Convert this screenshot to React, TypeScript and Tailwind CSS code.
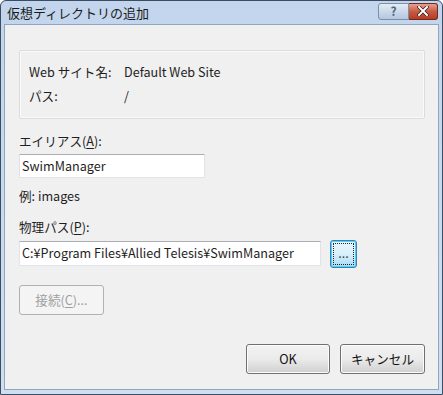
import React from "react";

const FONT = { fontFamily: '"Noto Sans CJK JP", "Liberation Sans", sans-serif' };

function Accel({ ch }: { ch: string }) {
  return <span className="underline underline-offset-2">{ch}</span>;
}

function DlgButton({
  children,
  className = "",
  disabled = false,
  focused = false,
}: {
  children: React.ReactNode;
  className?: string;
  disabled?: boolean;
  focused?: boolean;
}) {
  return (
    <div
      className={[
        "flex items-center justify-center rounded-[3px] border text-[12.6px]",
        disabled
          ? "border-[#adb2b5] bg-[#f4f4f4] text-[#a0a0a0]"
          : focused
          ? "border-[#3c7fb1] bg-gradient-to-b from-[#eaf6fd] via-[#d9f0fc] to-[#a7d9f5] text-[#111] shadow-[inset_0_0_0_1px_#48d4ff]"
          : "border-[#707070] bg-gradient-to-b from-[#f2f2f2] via-[#ebebeb] to-[#cfcfcf] text-[#111] shadow-[inset_0_0_0_1px_#fcfcfc]",
        className,
      ].join(" ")}
    >
      {children}
    </div>
  );
}

export default function App() {
  return (
    <div className="w-[443px] h-[395px] overflow-hidden bg-white" style={FONT}>
      <div className="w-full h-full rounded-t-[6px] border border-[#3a4d63] bg-gradient-to-b from-[#c2d5ec] to-[#cfdff0] flex flex-col">
        {/* Title bar */}
        <div className="h-[23px] flex items-center justify-between pl-[6px] pr-[4px] shrink-0">
          <span className="text-[13px] text-[#1b1b1b] leading-none">仮想ディレクトリの追加</span>
          <div className="flex -mt-[3px]">
            <div className="w-[31px] h-[17px] rounded-l-[3px] border border-[#7d8fa5] bg-gradient-to-b from-[#e3ecf6] to-[#b3c7de] flex items-center justify-center text-[12px] font-bold text-[#52657b] leading-none">
              ?
            </div>
            <div className="w-[29px] h-[17px] rounded-r-[3px] border border-l-0 border-[#6b2b22] bg-gradient-to-b from-[#e7a08e] via-[#c75a43] to-[#b83a22] flex items-center justify-center">
              <svg width="12" height="10" viewBox="0 0 12 10">
                <path d="M2 1 L10 9 M10 1 L2 9" stroke="#3a1a14" strokeWidth="3.4" strokeLinecap="square" />
                <path d="M2 1 L10 9 M10 1 L2 9" stroke="#ffffff" strokeWidth="2" strokeLinecap="square" />
              </svg>
            </div>
          </div>
        </div>

        {/* Client area */}
        <div className="flex-1 mx-[3px] mb-[4px] border border-[#8fa6c1] bg-[#f0f0f0] flex flex-col pl-[14px] pr-[13px] text-[12.6px] text-[#1e1e1e]">
          {/* Info group */}
          <div className="mt-[25px] h-[69px] border border-[#dcdcdc] rounded-[2px] shadow-[inset_0_0_0_1px_#fafafa] flex flex-col justify-center gap-[5px] pl-[9px]">
            <div className="flex">
              <span className="w-[95px]">Web サイト名:</span>
              <span>Default Web Site</span>
            </div>
            <div className="flex">
              <span className="w-[95px]">パス:</span>
              <span>/</span>
            </div>
          </div>

          <div className="mt-[13px] leading-[18px]">
            エイリアス(<Accel ch="A" />):
          </div>
          <div className="mt-[4px] w-[186px] h-[24px] bg-white border border-[#e2e3ea] border-t-[#abadb3] flex items-center pl-[2px]">
            SwimManager
          </div>
          <div className="mt-[9px] leading-[18px]">例: images</div>

          <div className="mt-[13px] leading-[18px]">
            物理パス(<Accel ch="P" />):
          </div>
          <div className="mt-[5px] flex items-start gap-[9px]">
            <div className="w-[302px] h-[25px] bg-white border border-[#e2e3ea] border-t-[#abadb3] flex items-center pl-[2px] whitespace-nowrap">
              C:¥Program Files¥Allied Telesis¥SwimManager
            </div>
            <div className="relative w-[27px] h-[28px] -mt-[1px]">
              <DlgButton focused className="w-full h-full">
                <span className="-mt-[2px] text-[#444]">...</span>
              </DlgButton>
              <div className="absolute inset-[3px] border border-dotted border-[#222] rounded-[1px]" />
            </div>
          </div>

          <DlgButton disabled className="mt-[17px] w-[85px] h-[30px]">
            接続(<Accel ch="C" />)...
          </DlgButton>

          <div className="mt-auto mb-[15px] flex justify-end gap-[10px]">
            <DlgButton className="w-[84px] h-[30px]">OK</DlgButton>
            <DlgButton className="w-[85px] h-[30px]">キャンセル</DlgButton>
          </div>
        </div>
      </div>
    </div>
  );
}
